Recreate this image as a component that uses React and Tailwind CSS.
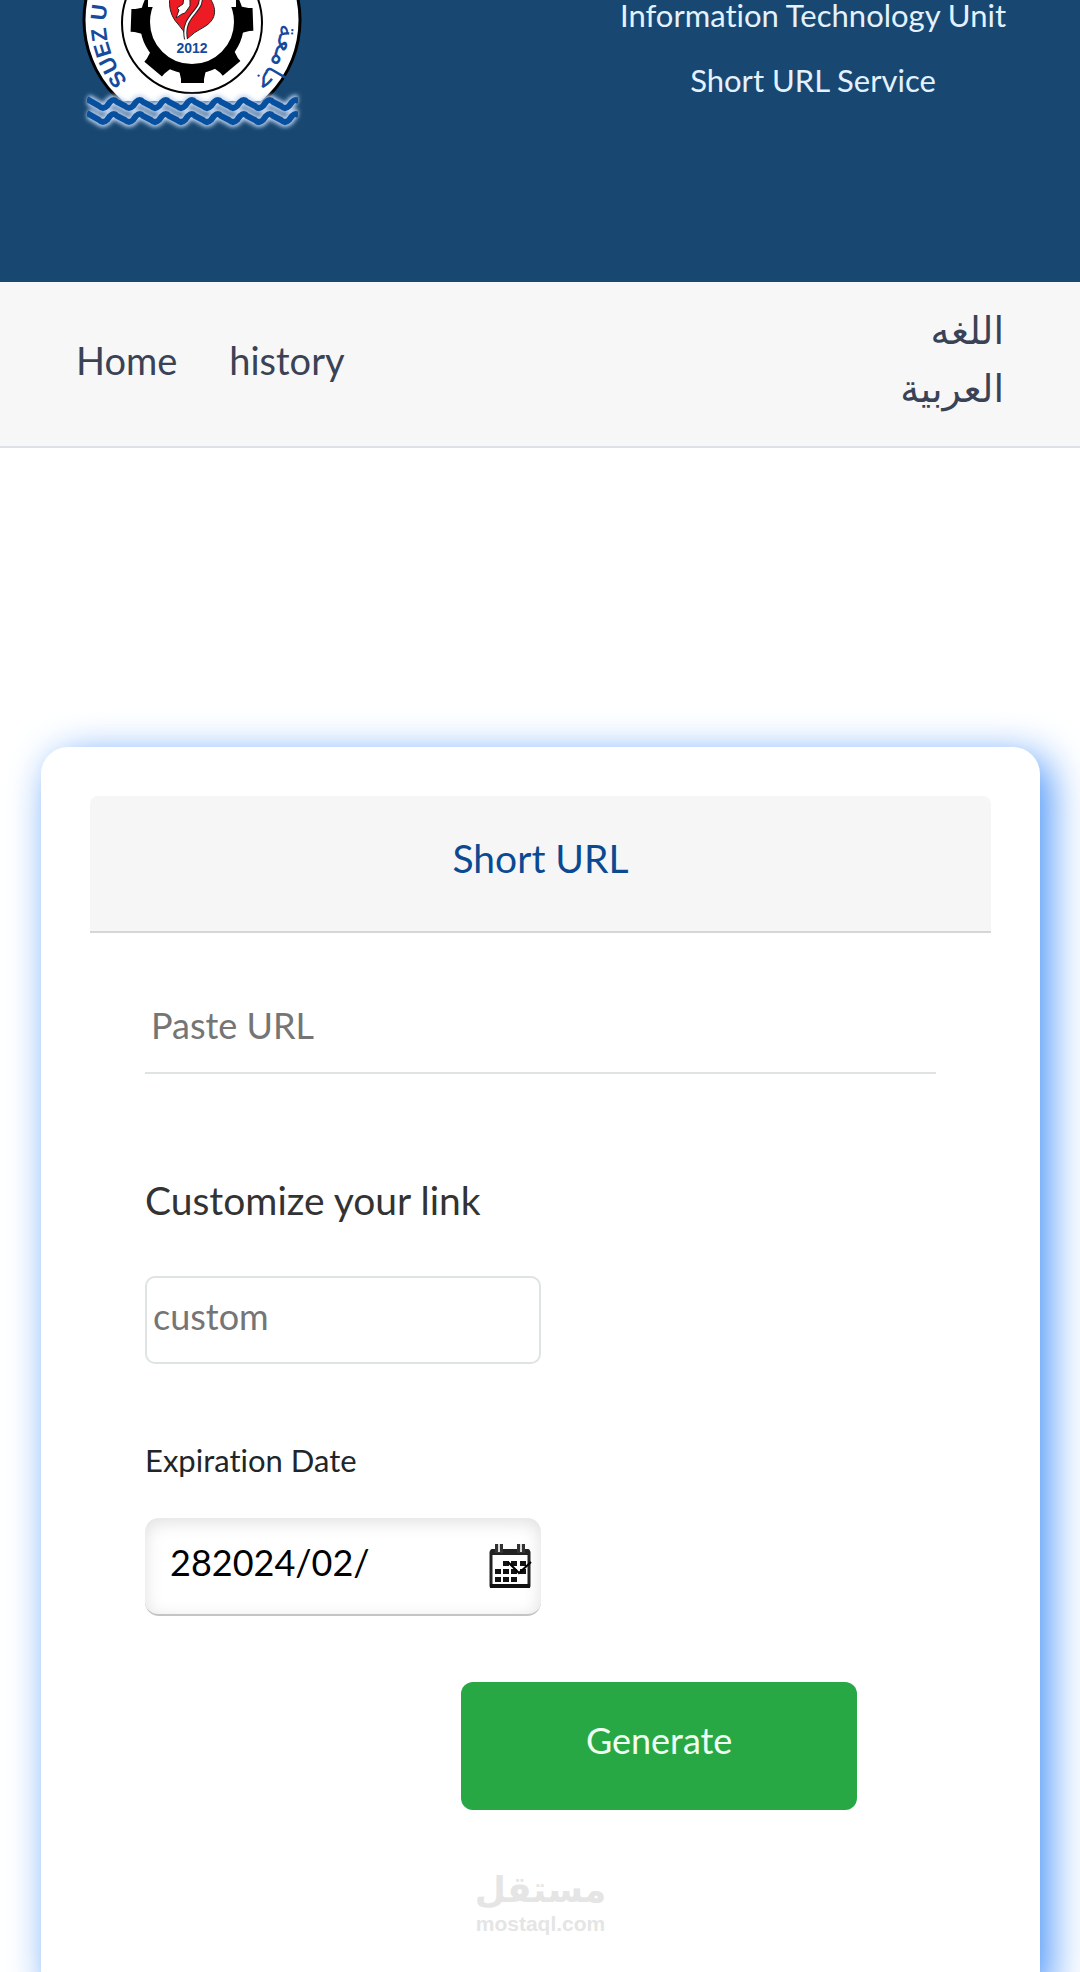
import React, { useState } from 'react';

const teeth = [0, 40, 92, 268, 320];

const waves = [100, 114];

const wavePath = (y) => {
  let d = `M17 ${y - 1}`;
  for (let x = 17; x < 210; x += 26) {
    d += ` L${x + 12} ${y + 6} Q${x + 16} ${y + 10} ${x + 20} ${y + 6} L${x + 23} ${y + 2} Q${x + 27} ${y - 2} ${x + 30} ${y + 2}`;
  }
  return d;
};

const UniversityLogo = () => (
  <svg className="h-[140px] w-[250px]" viewBox="0 0 250 140" role="img" aria-label="Suez University">
    <defs>
      <path id="ring-left" d="M58 80.5 A86 86 0 0 1 122 -63" />
      <path id="ring-right" d="M122 -65 A88 88 0 0 1 185 84" />
      <clipPath id="sea">
        <rect x="0" y="0" width="250" height="101" />
      </clipPath>
      <clipPath id="band">
        <rect x="17" y="90" width="211" height="44" />
      </clipPath>
      <filter id="glow" x="-10%" y="-50%" width="120%" height="200%">
        <feGaussianBlur stdDeviation="2" />
      </filter>
    </defs>
    <g clipPath="url(#sea)">
      <circle cx="122" cy="20" r="108" fill="#fff" stroke="#000" strokeWidth="3" />
    </g>
    <circle cx="122" cy="23" r="70" fill="#fff" stroke="#000" strokeWidth="2" />
    <circle cx="122" cy="22" r="47" fill="none" stroke="#000" strokeWidth="10" />
    {teeth.map((angle) => (
      <path key={angle} d="M109 70 L111 79 V83 H134 V79 L136 70 Z" transform={`rotate(${angle} 122 22)`} />
    ))}
    <rect x="78" y="-30" width="88" height="37" fill="#fff" />
    <path
      d="M100 -4 C98 8 102 18 108 24 Q114 30 117 39 Q124 32 134 27 C146 20 147 10 141 0 L146 -6 L120 -20 Z"
      fill="#ed1c24"
      stroke="#222"
      strokeWidth="1"
    />
    <path d="M116 39 C112 20 126 14 130 4 L132 -6" fill="none" stroke="#222" strokeWidth="4" />
    <path d="M116 39 C112 20 126 14 130 4 L132 -6" fill="none" stroke="#fff" strokeWidth="2" />
    <path d="M106 18 L109 10 L107 8 L113 4 L114 -4 L120 0 L120 6 L115 13 L112 14 Z" fill="#fff" stroke="#222" strokeWidth="1" />
    <text x="122" y="53" textAnchor="middle" fill="#164a9c" className="font-['Liberation_Sans'] text-[14px] font-bold">
      2012
    </text>
    <text fill="#164a9c" className="font-['Liberation_Sans'] text-[22px] font-bold">
      <textPath href="#ring-left">SUEZ U</textPath>
    </text>
    <text fill="#164a9c" textAnchor="end" className="font-['DejaVu_Sans'] text-[27px]">
      <textPath href="#ring-right" startOffset="100%">جامعة</textPath>
    </text>
    <g filter="url(#glow)">
      {waves.map((y) => (
        <path key={y} d={wavePath(y)} fill="none" stroke="#c4d7f2" strokeWidth="10" clipPath="url(#band)" />
      ))}
    </g>
    {waves.map((y) => (
      <path key={y} d={wavePath(y)} fill="none" stroke="#07509f" strokeWidth="6" clipPath="url(#band)" />
    ))}
  </svg>
);

const CalendarIcon = () => (
  <svg className="h-[44px] w-[44px]" viewBox="0 0 44 44" aria-hidden="true">
    <path d="M3 8 H41 V42 H3 Z" fill="#fff" stroke="#222" strokeWidth="3" strokeLinejoin="round" />
    <path d="M4 5 H40 Q42 5 42 8 V11 H2 V8 Q2 5 4 5 Z" fill="#222" />
    <path d="M7 0 H15 V9 H7 Z M29 0 H37 V9 H29 Z" fill="#333" />
    <path d="M10 0 H12 V8 H10 Z M32 0 H34 V8 H32 Z" fill="#ddd" />
    <path d="M2 40 H42 V44 H2 Z" fill="#111" />
    <path
      d="M15 17h6v5h-6z M23 17h6v5h-6z M32 17h6v5h-6z M7 25h6v5H7z M15 25h6v5h-6z M23 25h6v5h-6z M32 25h6v5h-6z M7 33h6v5H7z M15 33h6v5h-6z M23 33h6v5h-6z"
      fill="#111"
    />
    <path d="M20 18 L31 29 L43 18" fill="none" stroke="#000" strokeWidth="2" />
  </svg>
);

const Header = () => (
  <header className="flex h-[282px] items-start justify-between bg-[#184872] pl-[70px] pr-[74px]">
    <UniversityLogo />
    <div className="flex flex-col gap-[35px] text-center text-[31px] leading-[30px] text-[#e4f2ff]">
      <p>Information Technology Unit</p>
      <p>Short URL Service</p>
    </div>
  </header>
);

const NavBar = () => (
  <nav className="flex items-center justify-between border-b-2 border-[#dee2e6] bg-[#f7f7f7] px-[76px] pb-7 pt-5 text-[38px] leading-[58px] text-[#3a4256]">
    <div className="flex gap-[52px]">
      <a href="#home">Home</a>
      <a href="#history">history</a>
    </div>
    <a href="#ar" lang="ar" dir="rtl" className="w-[110px] font-['DejaVu_Sans'] text-[38px]">
      اللغه العربية
    </a>
  </nav>
);

const ShortUrlForm = () => {
  const [url, setUrl] = useState('');
  const [custom, setCustom] = useState('');
  const [expiration, setExpiration] = useState('282024/02/');

  return (
    <form
      className="ml-[41px] mr-10 mt-[299px] flex grow flex-col rounded-t-[27px] bg-white p-[49px] shadow-[10px_10px_40px_#4792f8]"
      onSubmit={(e) => e.preventDefault()}
    >
      <h1 className="rounded-t-lg border-b-2 border-[#d6d6d6] bg-[#f6f6f6] pb-10 pt-[29px] text-center text-[39px] leading-[66px] text-[#0b4a92]">
        Short URL
      </h1>
      <div className="flex flex-col items-start px-[55px]">
        <input
          type="text"
          aria-label="Paste URL"
          placeholder="Paste URL"
          value={url}
          onChange={(e) => setUrl(e.target.value)}
          className="mt-[45px] h-24 w-full border-b-2 border-[#dfe3e3] px-[6px] text-[36px] placeholder:text-[#757575]"
        />
        <label htmlFor="custom" className="mt-24 text-[39px] leading-[60px] text-[#333]">
          Customize your link
        </label>
        <input
          id="custom"
          type="text"
          placeholder="custom"
          value={custom}
          onChange={(e) => setCustom(e.target.value)}
          className="mt-[46px] h-[88px] w-1/2 rounded-[10px] border-2 border-[#dfe3e3] px-[6px] pb-2 text-[36px] placeholder:text-[#757575]"
        />
        <label htmlFor="expiration" className="mt-[72px] text-[31px] leading-[48px] text-[#212529]">
          Expiration Date
        </label>
        <div className="relative mt-[34px] w-1/2">
          <input
            id="expiration"
            type="text"
            value={expiration}
            onChange={(e) => setExpiration(e.target.value)}
            className="h-[98px] w-full rounded-[14px] border-b-2 border-[#c4c4c4] pb-2 pl-[25px] pr-16 text-[36px] text-black shadow-[inset_0_4px_18px_rgba(0,0,0,0.13)]"
          />
          <span className="pointer-events-none absolute right-[9px] top-[26px]">
            <CalendarIcon />
          </span>
        </div>
        <button
          type="submit"
          className="ml-[40%] mt-[66px] h-32 w-1/2 rounded-xl bg-[#28a745] pb-3 text-[36px] text-[#effff2]"
        >
          Generate
        </button>
      </div>
      <div className="mt-[58px] text-center font-['Liberation_Sans'] font-bold text-[#e5e5e5]">
        <p lang="ar" className="font-['DejaVu_Sans'] text-[36px] leading-[44px]">مستقل</p>
        <p className="text-[21px] leading-6">mostaql.com</p>
      </div>
    </form>
  );
};

const App = () => (
  <div className="flex min-h-screen flex-col overflow-hidden bg-white font-['Lato','DejaVu_Sans',sans-serif] [font-variant-ligatures:no-common-ligatures]">
    <Header />
    <NavBar />
    <ShortUrlForm />
  </div>
);

export default App;
